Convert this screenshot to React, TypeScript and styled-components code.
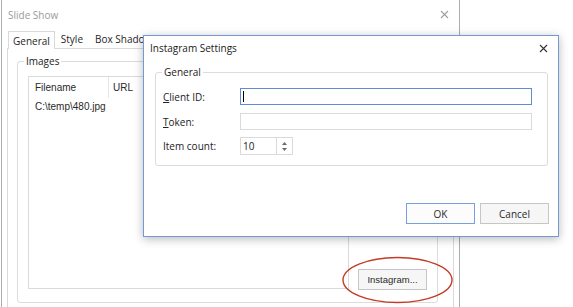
import React from 'react';
import styled, { createGlobalStyle } from 'styled-components';

const GlobalStyle = createGlobalStyle`
  html, body { margin: 0; padding: 0; background: #fff; }
  body { font-family: "Open Sans", "Noto Sans", sans-serif; font-size: 10px; color: #222; }
  * { box-sizing: border-box; }
`;

const Desktop = styled.div`
  position: relative;
  width: 573px;
  height: 307px;
  overflow: hidden;
  background: #fff;
`;

const Window = styled.div<{ $left: number; $top: number; $width: number; $height: number; $layer: number; $active?: boolean }>`
  position: absolute;
  z-index: ${p => p.$layer};
  left: ${p => p.$left}px;
  top: ${p => p.$top}px;
  width: ${p => p.$width}px;
  height: ${p => p.$height}px;
  border: 1px solid ${p => (p.$active ? '#7399d8' : '#acacac')};
  background: #fff;
  display: flex;
  flex-direction: column;
  box-shadow: ${p => (p.$active ? '0 2px 9px rgba(0,0,0,0.28)' : 'none')};
`;

const TitleBar = styled.div<{ $height: number; $active?: boolean }>`
  height: ${p => p.$height}px;
  flex: none;
  display: flex;
  align-items: center;
  justify-content: space-between;
  padding: 0 10px 0 6px;
  color: ${p => (p.$active ? '#1a1a1a' : '#9a9a9a')};
  font-size: 10px;
`;

const CloseIcon = ({ color }: { color: string }) => (
  <svg width="9" height="9" viewBox="0 0 9 9">
    <path d="M1 1 L8 8 M8 1 L1 8" stroke={color} strokeWidth="1.1" fill="none" />
  </svg>
);

const TabStrip = styled.div`
  height: 19px;
  flex: none;
  display: flex;
  align-items: flex-end;
  margin: 0 5px;
  padding-left: 1px;
  position: relative;
  z-index: 1;
`;

const Tab = styled.div<{ $selected?: boolean }>`
  height: ${p => (p.$selected ? 18 : 16)}px;
  margin-bottom: ${p => (p.$selected ? -1 : 1)}px;
  padding: 0 ${p => (p.$selected ? 4 : 6)}px;
  display: flex;
  align-items: center;
  background: #fff;
  border: ${p => (p.$selected ? '1px solid #d9d9d9' : 'none')};
  border-bottom: none;
  white-space: nowrap;
  color: #1e1e1e;
`;

const TabPage = styled.div`
  flex: 1;
  margin: 0 5px;
  border: 1px solid #d9d9d9;
  display: flex;
  flex-direction: column;
`;

const Group = styled.div<{ $height?: number }>`
  position: relative;
  border: 1px solid #dcdcdc;
  border-radius: 3px;
  ${p => (p.$height ? `height: ${p.$height}px;` : '')}
`;

const GroupLegend = styled.span`
  position: absolute;
  left: 6px;
  top: -8px;
  padding: 0 2px;
  background: #fff;
  line-height: 14px;
  color: #222;
`;

const ImagesGroup = styled(Group)`
  margin: 12px 15px 0 9px;
  display: flex;
  padding: 14px 10px 13px 10px;
`;

const ListView = styled.div`
  width: 321px;
  height: 213px;
  border: 1px solid #dadada;
  font-family: "Liberation Sans", Arial, sans-serif;
  font-size: 10px;
  color: #2a2a2a;
  display: flex;
  flex-direction: column;
`;

const ListHeader = styled.div`
  height: 21px;
  display: flex;
  flex: none;
`;

const HeaderCell = styled.div<{ $width?: number }>`
  ${p => (p.$width ? `width: ${p.$width}px; border-right: 1px solid #e5e5e5;` : 'flex: 1;')}
  display: flex;
  align-items: center;
  padding-left: ${p => (p.$width ? 6 : 4)}px;
`;

const ListRow = styled.div`
  height: 17px;
  display: flex;
  align-items: center;
  padding-left: 6px;
`;

const Button = styled.div<{ $default?: boolean; $classic?: boolean }>`
  width: 69px;
  height: 21px;
  flex: none;
  display: flex;
  align-items: center;
  justify-content: center;
  border: 1px solid ${p => (p.$default ? '#7a9fdc' : '#c6c6c6')};
  background: ${p => (p.$default ? '#fcfcfc' : '#f6f6f6')};
  color: #2a2a2a;
  font-family: ${p => (p.$classic ? '"Liberation Sans", Arial, sans-serif' : '"Open Sans", "Noto Sans", sans-serif')};
  font-size: ${p => (p.$classic ? 9.5 : 10)}px;
`;

const SideButton = styled(Button)`
  align-self: flex-end;
  margin-left: 9px;
  margin-bottom: -1px;
`;

const DialogBody = styled.div`
  flex: 1;
  display: flex;
  flex-direction: column;
`;

const SettingsGroup = styled(Group)`
  margin: 12px 10px 0 11px;
  padding: 15px 15px 10px 7px;
  display: flex;
  flex-direction: column;
  gap: 8px;
`;

const FieldRow = styled.div<{ $gapTop?: number }>`
  display: flex;
  align-items: center;
  ${p => (p.$gapTop !== undefined ? `margin-top: ${p.$gapTop}px;` : '')}
`;

const FieldLabel = styled.div`
  width: 77px;
  flex: none;
  color: #222;
`;

const Mnemonic = styled.span`
  text-decoration: underline;
  text-underline-offset: 1px;
`;

const TextBox = styled.div<{ $focused?: boolean; $width?: number; $height?: number }>`
  ${p => (p.$width ? `width: ${p.$width}px;` : 'flex: 1;')}
  height: ${p => p.$height ?? 17}px;
  border: 1px solid ${p => (p.$focused ? '#5f8cd4' : '#dadada')};
  display: flex;
  align-items: center;
  padding-left: 2px;
  background: #fff;
  color: #1a1a1a;
`;

const Caret = styled.span`
  width: 1px;
  height: 11px;
  background: #000;
`;

const Spinner = styled.div`
  width: 16px;
  height: 18px;
  border: 1px solid #dadada;
  border-left: none;
  display: flex;
  flex-direction: column;
  align-items: center;
  justify-content: center;
  gap: 3px;
`;

const ButtonRow = styled.div`
  margin-top: auto;
  display: flex;
  justify-content: flex-end;
  gap: 5px;
  padding: 0 9px 12px 0;
`;

const Annotation = styled.svg`
  position: absolute;
  z-index: 3;
  left: 340px;
  top: 254px;
  pointer-events: none;
`;

const Arrow = ({ up }: { up?: boolean }) => (
  <svg width="5" height="3" viewBox="0 0 5 3">
    <path d={up ? 'M0 3 L2.5 0 L5 3 Z' : 'M0 0 L2.5 3 L5 0 Z'} fill="#6a6a6a" />
  </svg>
);

export default function App() {
  return (
    <>
      <GlobalStyle />
      <Desktop>
        <Window $left={1} $top={-1} $width={459} $height={330} $layer={1}>
          <TitleBar $height={29}>
            <span>Slide Show</span>
            <CloseIcon color="#a0a0a0" />
          </TitleBar>
          <TabStrip>
            <Tab $selected>General</Tab>
            <Tab>Style</Tab>
            <Tab>Box Shadow</Tab>
          </TabStrip>
          <TabPage>
            <ImagesGroup $height={242}>
              <GroupLegend>Images</GroupLegend>
              <ListView>
                <ListHeader>
                  <HeaderCell $width={80}>Filename</HeaderCell>
                  <HeaderCell>URL</HeaderCell>
                </ListHeader>
                <ListRow>C:\temp\480.jpg</ListRow>
              </ListView>
              <SideButton $classic>Instagram...</SideButton>
            </ImagesGroup>
          </TabPage>
        </Window>

        <Window $left={143} $top={35} $width={416} $height={202} $layer={2} $active>
          <TitleBar $height={24} $active>
            <span>Instagram Settings</span>
            <CloseIcon color="#333" />
          </TitleBar>
          <DialogBody>
            <SettingsGroup>
              <GroupLegend>General</GroupLegend>
              <FieldRow>
                <FieldLabel>
                  <Mnemonic>C</Mnemonic>lient ID:
                </FieldLabel>
                <TextBox $focused>
                  <Caret />
                </TextBox>
              </FieldRow>
              <FieldRow>
                <FieldLabel>
                  <Mnemonic>T</Mnemonic>oken:
                </FieldLabel>
                <TextBox />
              </FieldRow>
              <FieldRow $gapTop={-1}>
                <FieldLabel>Item count:</FieldLabel>
                <TextBox $width={37} $height={18}>10</TextBox>
                <Spinner>
                  <Arrow up />
                  <Arrow />
                </Spinner>
              </FieldRow>
            </SettingsGroup>
            <ButtonRow>
              <Button $default>OK</Button>
              <Button>Cancel</Button>
            </ButtonRow>
          </DialogBody>
        </Window>

        <Annotation width="116" height="52" viewBox="0 0 116 52">
          <ellipse cx="57.5" cy="26" rx="54.5" ry="22.5" fill="none" stroke="#c43c26" strokeWidth="1.4" />
        </Annotation>
      </Desktop>
    </>
  );
}
